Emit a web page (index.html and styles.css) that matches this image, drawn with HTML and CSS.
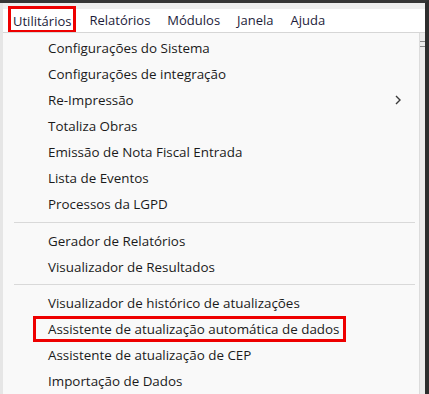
FILE: index.html
```html
<!DOCTYPE html>
<html lang="pt-BR">
<head>
  <meta charset="UTF-8">
  <title>Utilitários</title>
  <link rel="stylesheet" href="styles.css">
</head>
<body>
  <div class="screen">
    <div class="menubar">
      <span class="menu-item marked">Utilitários</span>
      <span class="menu-item">Relatórios</span>
      <span class="menu-item">Módulos</span>
      <span class="menu-item">Janela</span>
      <span class="menu-item">Ajuda</span>
    </div>

    <div class="body-row">
      <div class="dropdown">
        <div class="item">Configurações do Sistema</div>
        <div class="item">Configurações de integração</div>
        <div class="item has-sub">
          <span>Re-Impressão</span>
          <svg class="chevron" width="6" height="10" viewBox="0 0 6 10">
            <path d="M1 1 L5 5 L1 9" fill="none" stroke="#3a3a3a" stroke-width="1.4"/>
          </svg>
        </div>
        <div class="item">Totaliza Obras</div>
        <div class="item">Emissão de Nota Fiscal Entrada</div>
        <div class="item">Lista de Eventos</div>
        <div class="item">Processos da LGPD</div>
        <div class="sep sep-a"></div>
        <div class="item">Gerador de Relatórios</div>
        <div class="item">Visualizador de Resultados</div>
        <div class="sep sep-b"></div>
        <div class="item">Visualizador de histórico de atualizações</div>
        <div class="item marked">Assistente de atualização automática de dados</div>
        <div class="item">Assistente de atualização de CEP</div>
        <div class="item">Importação de Dados</div>
      </div>
      <div class="scroll-strip">
        <span class="grip"></span>
      </div>
    </div>
  </div>
</body>
</html>
```

FILE: styles.css
```css
html, body { margin: 0; padding: 0; }
body {
  width: 429px;
  height: 394px;
  overflow: hidden;
  background: #e6e6e6;
  font-family: "Open Sans", "Noto Sans", sans-serif;
  font-size: 13.4px;
  color: #1b1b1b;
}

.screen {
  box-sizing: border-box;
  height: 394px;
  padding-left: 3px;
  border-top: 3px solid #363636;
  border-right: 4px solid #2e2e2e;
  display: flex;
  flex-direction: column;
}

/* barra de menu */
.menubar {
  height: 29px;
  display: flex;
  align-items: stretch;
  padding-left: 1px;
  font-size: 13px;
  background: linear-gradient(to bottom, #eeeeee 0, #eeeeee 6px, #ffffff 6px);
  border-bottom: 1px solid #d6d6d6;
}
.menu-item {
  display: flex;
  align-items: center;
  padding: 5px 8.5px 0;
  color: #1c1c3a;
}
.menu-item.marked {
  margin: 3px 4.5px 0 4px;
  padding: 2px 2px 0;
  border: 3px solid #ee0000;
  border-bottom-width: 2px;
  background: #fff;
}

.body-row {
  flex: 1;
  display: flex;
}

/* menu suspenso */
.dropdown {
  flex: 1;
  padding-top: 2px;
  background: #f9f9f9;
  border-right: 1px solid #dcdcdc;
}
.item {
  height: 26px;
  line-height: 26px;
  padding-left: 45px;
  white-space: nowrap;
}
.item.has-sub {
  display: flex;
  justify-content: space-between;
  align-items: center;
  padding-right: 18px;
}
.item.marked {
  box-sizing: border-box;
  height: 26px;
  line-height: 20px;
  margin: 0 73px 0 30px;
  padding-left: 12px;
  border: 3px solid #ee0000;
}

.sep::after {
  content: "";
  display: block;
  margin-left: 11px;
  margin-right: 4px;
  border-top: 1px solid #d9d9d9;
}
.sep-a { height: 11px; padding-top: 5px; box-sizing: border-box; }
.sep-b { height: 10px; padding-top: 4px; box-sizing: border-box; }

.scroll-strip {
  width: 5px;
  background: #ececec;
}
.grip {
  display: block;
  margin-top: 8px;
  height: 4px;
  border-top: 1px solid #8a8a8a;
  border-bottom: 1px solid #8a8a8a;
}
```
